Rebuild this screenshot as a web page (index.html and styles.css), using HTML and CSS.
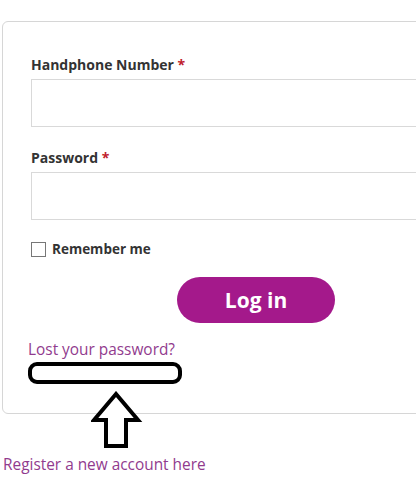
FILE: index.html
```html
<!DOCTYPE html>
<html>
<head>
<meta charset="utf-8">
<link rel="stylesheet" href="styles.css">
</head>
<body>
<div class="page">
  <form class="card">
    <div class="field">
      <label class="label">Handphone Number <span class="req">*</span></label>
      <div class="input"></div>
    </div>
    <div class="field">
      <label class="label">Password <span class="req">*</span></label>
      <div class="input"></div>
    </div>
    <label class="remember"><span class="box"></span>Remember me</label>
    <div class="actions"><button type="button" class="btn">Log in</button></div>
    <a class="link lost">Lost your password?</a>
    <div class="scribble"></div>
  </form>
  <svg class="arrow" width="54" height="60" viewBox="0 0 54 60">
    <path d="M25 3 L3 29 L15 29 L15 55 L35 55 L35 29 L47 29 Z" fill="#fff" stroke="#000" stroke-width="4" stroke-linejoin="miter"/>
  </svg>
  <a class="link register">Register a new account here</a>
</div>
</body>
</html>
```
FILE: styles.css
```css
* { box-sizing: border-box; }
html, body { margin: 0; padding: 0; background: #fff; }
body { font-family: "Open Sans", "Noto Sans", sans-serif; color: #333; overflow: hidden; }
.page { width: 416px; height: 495px; position: relative; padding-top: 21px; overflow: hidden; }
.card {
  display: block;
  margin-left: 2px;
  width: 440px;
  height: 393px;
  border: 1px solid #d6d6d6;
  border-radius: 6px;
  padding: 34px 0 0 28px;
  position: relative;
}
.field { margin-bottom: 22px; }
.label { display: block; font-weight: 700; font-size: 14px; line-height: 18px; color: #333; margin-bottom: 5px; }
.req { color: #c0202c; }
.input { width: 420px; height: 48px; border: 1px solid #d9d9d9; background: #fff; }
.remember { display: flex; align-items: center; gap: 6px; font-weight: 700; font-size: 13.5px; color: #333; margin-top: -2px; }
.box { width: 15px; height: 15px; border: 1px solid #777; background: #fff; }
.actions { margin: 19px 0 0 146px; }
.btn {
  width: 158px; height: 46px; border: 0; border-radius: 23px;
  background: #a4198b; color: #fff;
  font-family: "Open Sans", sans-serif; font-weight: 700; font-size: 21px;
  padding: 0; line-height: 44px;
}
.link { display: block; color: #913b8e; font-size: 15.4px; line-height: 18px; text-decoration: none; }
.lost { margin: 18px 0 0 -3px; }
.scribble {
  margin: 3px 0 0 -3px;
  width: 154px; height: 22px;
  border: 4px solid #000; border-radius: 9px;
}
.arrow { position: absolute; left: 91px; top: 391px; }
.register { margin: 42px 0 0 3px; }
```
